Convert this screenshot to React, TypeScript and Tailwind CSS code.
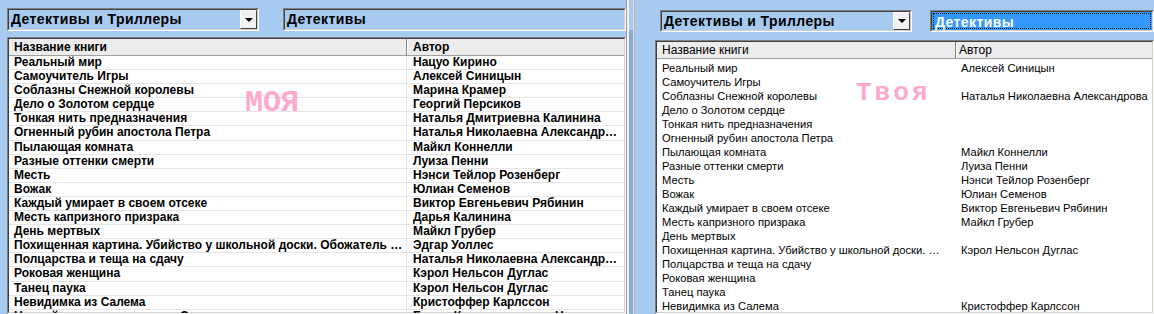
import React from 'react'

// левое окно — «моя» версия, правое — «твоя»
const leftRows: [string, string][] = [
  ['Реальный мир', 'Нацуо Кирино'],
  ['Самоучитель Игры', 'Алексей Синицын'],
  ['Соблазны Снежной королевы', 'Марина Крамер'],
  ['Дело о Золотом сердце', 'Георгий Персиков'],
  ['Тонкая нить предназначения', 'Наталья Дмитриевна Калинина'],
  ['Огненный рубин апостола Петра', 'Наталья Николаевна Александрова'],
  ['Пылающая комната', 'Майкл Коннелли'],
  ['Разные оттенки смерти', 'Луиза Пенни'],
  ['Месть', 'Нэнси Тейлор Розенберг'],
  ['Вожак', 'Юлиан Семенов'],
  ['Каждый умирает в своем отсеке', 'Виктор Евгеньевич Рябинин'],
  ['Месть капризного призрака', 'Дарья Калинина'],
  ['День мертвых', 'Майкл Грубер'],
  ['Похищенная картина. Убийство у школьной доски. Обожатель из прошлого', 'Эдгар Уоллес'],
  ['Полцарства и теща на сдачу', 'Наталья Николаевна Александрова'],
  ['Роковая женщина', 'Кэрол Нельсон Дуглас'],
  ['Танец паука', 'Кэрол Нельсон Дуглас'],
  ['Невидимка из Салема', 'Кристоффер Карлссон'],
  ['Ночной кошмар на острове Скелетов', 'Борис Константинович Николаев'],
]

const rightRows: [string, string][] = [
  ['Реальный мир', 'Алексей Синицын'],
  ['Самоучитель Игры', ''],
  ['Соблазны Снежной королевы', 'Наталья Николаевна Александрова'],
  ['Дело о Золотом сердце', ''],
  ['Тонкая нить предназначения', ''],
  ['Огненный рубин апостола Петра', ''],
  ['Пылающая комната', 'Майкл Коннелли'],
  ['Разные оттенки смерти', 'Луиза Пенни'],
  ['Месть', 'Нэнси Тейлор Розенберг'],
  ['Вожак', 'Юлиан Семенов'],
  ['Каждый умирает в своем отсеке', 'Виктор Евгеньевич Рябинин'],
  ['Месть капризного призрака', 'Майкл Грубер'],
  ['День мертвых', ''],
  ['Похищенная картина. Убийство у школьной доски. Обожатель из прошлого', 'Кэрол Нельсон Дуглас'],
  ['Полцарства и теща на сдачу', ''],
  ['Роковая женщина', ''],
  ['Танец паука', ''],
  ['Невидимка из Салема', 'Кристоффер Карлссон'],
]

function Sunken({ className = '', children }: { className?: string; children: React.ReactNode }) {
  return (
    <div className={`border border-t-[#808080] border-l-[#808080] border-b-white border-r-white ${className}`}>
      <div className="flex h-full w-full border border-t-[#404040] border-l-[#404040] border-b-[#d4d0c8] border-r-[#d4d0c8]">
        {children}
      </div>
    </div>
  )
}

function Combo({ text }: { text: string }) {
  return (
    <Sunken className="h-full w-[252px] shrink-0">
      <div className="flex-1 truncate pl-[2px] text-[14px] font-bold tracking-[0.4px] leading-[19px]">{text}</div>
      <div className="flex w-[17px] items-center justify-center border border-t-white border-l-white border-b-[#404040] border-r-[#404040] bg-[#f0f0f0]">
        <div className="h-0 w-0 border-x-[4px] border-t-[4px] border-x-transparent border-t-black" />
      </div>
    </Sunken>
  )
}

export default function App() {
  return (
    <div className="flex h-[314px] w-[1154px] overflow-hidden bg-[#a6caf0] font-['Liberation_Sans',Arial,sans-serif] text-black">
      {/* левое окно */}
      <div className="relative flex w-[626px] shrink-0 flex-col pl-[7px] pt-[8px]">
        <div className="flex h-[23px]">
          <Combo text="Детективы и Триллеры" />
          <Sunken className="ml-[24px] h-full flex-1">
            <div className="pl-[2px] text-[14px] font-bold tracking-[0.4px] leading-[19px]">Детективы</div>
          </Sunken>
        </div>
        <Sunken className="mt-[6px] flex-1 overflow-hidden">
          <div className="flex w-full flex-col bg-white text-[12px] font-bold">
            <div className="flex h-[17px] shrink-0 border-b border-[#a0a0a0] bg-[#ececec]">
              <div className="w-[398px] shrink-0 border-r border-[#808080] pl-[5px] leading-[16px] shadow-[1px_0_0_white]">Название книги</div>
              <div className="flex-1 pl-[6px] leading-[16px]">Автор</div>
            </div>
            {leftRows.map(([name, author], i) => (
              <div key={i} className="flex h-[14.1px] shrink-0 border-b border-[#e6e6e6]">
                <div className="w-[398px] shrink-0 truncate border-r border-[#e6e6e6] pl-[5px] leading-[13px]">{name}</div>
                <div className="min-w-0 flex-1 truncate pl-[6px] pr-[4px] leading-[13px]">{author}</div>
              </div>
            ))}
          </div>
        </Sunken>
        <div className="absolute left-[245px] top-[88px] font-['Liberation_Mono','Courier_New',monospace] text-[30px] font-bold uppercase leading-none text-[#ffaacc]">
          моя
        </div>
      </div>

      {/* граница между окнами */}
      <div className="flex w-[9px] shrink-0">
        <div className="w-px bg-[#9a9a9a]" />
        <div className="w-[2px] bg-[#f4f4f4]" />
        <div className="flex w-[4px] flex-col">
          <div className="h-[30px] bg-[#a6caf0]" />
          <div className="flex-1 bg-[#86ace0]" />
        </div>
        <div className="w-px bg-[#e0e0e0]" />
        <div className="w-px bg-[#b8b8b8]" />
      </div>

      {/* правое окно */}
      <div className="relative flex flex-1 flex-col pl-[20px] pt-[10px]">
        <div className="flex h-[22px] pl-[5px]">
          <Combo text="Детективы и Триллеры" />
          <Sunken className="ml-[18px] h-full flex-1">
            <div className="flex-1 bg-[#3399ff] p-px">
              <div className="h-full border border-dotted border-[#1a1a1a] pl-[1px] text-[14px] font-bold tracking-[0.4px] leading-[16px] text-white">Детективы</div>
            </div>
          </Sunken>
        </div>
        <Sunken className="mt-[8px] flex-1 overflow-hidden">
          <div className="flex w-full flex-col bg-white text-[11.2px]">
            <div className="flex h-[17px] shrink-0 border-b border-[#a0a0a0] bg-[#ececec]">
              <div className="w-[299px] shrink-0 border-r border-[#808080] pl-[5px] text-[12px] leading-[16px] shadow-[1px_0_0_white]">Название книги</div>
              <div className="flex-1 pl-[3px] text-[12px] leading-[16px]">Автор</div>
            </div>
            <div className="h-[2px] shrink-0" />
            {rightRows.map(([name, author], i) => (
              <div key={i} className="flex h-[14px] shrink-0">
                <div className="w-[299px] shrink-0 truncate pl-[5px] pr-[8px] leading-[14px]">{name}</div>
                <div className="min-w-0 flex-1 truncate pl-[5px] leading-[14px]">{author}</div>
              </div>
            ))}
          </div>
        </Sunken>
        <div className="absolute left-[221px] top-[80px] font-['Liberation_Mono','Courier_New',monospace] text-[26px] font-bold tracking-[3px] leading-none text-[#ffaacc]">
          Твоя
        </div>
      </div>
    </div>
  )
}
